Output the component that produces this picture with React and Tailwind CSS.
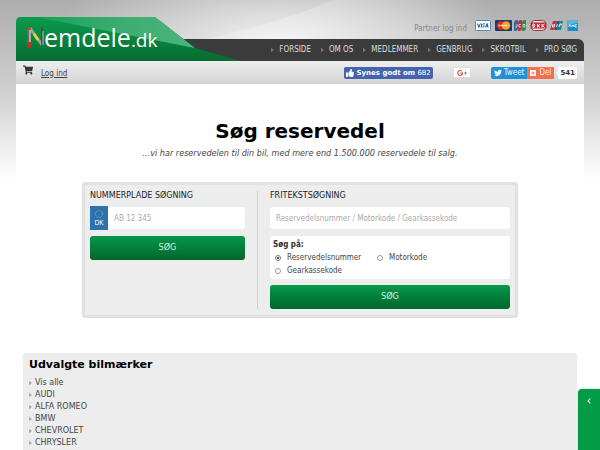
import React, { useState } from "react";
import { FaChevronLeft, FaShoppingCart, FaThumbsUp, FaTwitter } from "react-icons/fa";
import { FaGooglePlusG } from "react-icons/fa6";

const menu = ["FORSIDE", "OM OS", "MEDLEMMER", "GENBRUG", "SKROTBIL", "PRO SØG"];

const brands = ["Vis alle", "AUDI", "ALFA ROMEO", "BMW", "CHEVROLET", "CHRYSLER"];

const searchTypes = ["Reservedelsnummer", "Motorkode", "Gearkassekode"];

const Arrow = ({ className }) => (
  <svg viewBox="0 0 4 6" className={`h-[6px] w-[3px] shrink-0 ${className}`} aria-hidden="true">
    <path d="M0 0L4 3L0 6Z" fill="currentColor" />
  </svg>
);

// Grå baggrund med lysskær bag headeren
const Background = () => (
  <svg
    viewBox="0 0 600 180"
    preserveAspectRatio="none"
    className="absolute inset-x-0 top-0 h-[180px] w-full"
    aria-hidden="true"
  >
    <defs>
      <linearGradient id="bgFade" x1="0" y1="0" x2="0" y2="1">
        <stop offset="0" stopColor="#adadad" />
        <stop offset="0.5" stopColor="#cfcfcf" />
        <stop offset="1" stopColor="#fff" />
      </linearGradient>
      <radialGradient id="bgGlow" cx="0.5" cy="0.5" r="0.5">
        <stop offset="0" stopColor="#fff" stopOpacity="0.8" />
        <stop offset="1" stopColor="#fff" stopOpacity="0" />
      </radialGradient>
      <linearGradient id="bgBeam" x1="0.3" y1="0" x2="1" y2="0">
        <stop offset="0" stopColor="#fff" stopOpacity="0.25" />
        <stop offset="1" stopColor="#fff" stopOpacity="0" />
      </linearGradient>
    </defs>
    <rect width="600" height="180" fill="url(#bgFade)" />
    <ellipse cx="280" cy="42" rx="230" ry="90" fill="url(#bgGlow)" />
    <path d="M332 0Q290 20 205 39H480V0Z" fill="url(#bgBeam)" />
  </svg>
);

// Kort der kan betales med
const Cards = () => (
  <svg viewBox="0 0 104 12" className="h-3 w-[104px]" aria-hidden="true">
    <rect x="0.5" y="0.5" width="15" height="10" rx="1" fill="#fff" stroke="#4b8dbb" />
    <path d="M2.500 3.500l1.300 4l1.500-4M6.800 3.500l-.6 4M9.800 3.800c-2-.6-2.200.8-1.200 1.500s.8 2-1.200 1.700M10.300 7.500l1.800-4l1 4M11 6.300h2" fill="none" stroke="#17578f" strokeWidth="1" />
    <rect x="20" y="0" width="17" height="11" rx="1" fill="#1c3a6e" />
    <circle cx="26" cy="5.500" r="4.300" fill="#d8301f" />
    <circle cx="31" cy="5.500" r="4.300" fill="#f5a11c" />
    <path d="M23.500 5.500h10" stroke="#fff" strokeOpacity="0.800" strokeWidth="1.400" strokeDasharray="1.400 .5" />
    <path d="M42 0h1v8q0 3-3 3h-1V3q0-3 3-3z" fill="#3267a8" />
    <path d="M46 0h1v8q0 3-3 3h-1V3q0-3 3-3z" fill="#c32c45" />
    <path d="M50 0h1v8q0 3-3 3h-1V3q0-3 3-3z" fill="#2e8b4b" />
    <path d="M42 4v3h-2M46 4.500h-2v2.500h2M48 4.500h2v2.500h-2z" fill="none" stroke="#fff" strokeOpacity="0.800" strokeWidth="0.800" />
    <rect x="56.500" y="0.500" width="14" height="10" rx="3" fill="#f1dcdc" stroke="#8f3a3d" />
    <rect x="55.500" y="2.500" width="16" height="6" rx="1" fill="#bf2c35" />
    <path d="M58 4v3.500h1q1.800-1.700 0-3.500zM62.500 4v3.500M65 4l-2 1.800l2 1.700M67 4v3.500M69.500 4l-2 1.800l2 1.700" fill="none" stroke="#fff" />
    <path d="M78 1h4l-2.500 9H75z" fill="#d42d3d" />
    <path d="M82 1h3l-2.500 9h-3z" fill="#245986" />
    <path d="M85 1h3l-2 9h-4z" fill="#168a8b" />
    <path d="M78 4l-.5 3h1.500l.6-3M82.500 4l-1 3M84 7l1-3h1.500l-.5 1.500" fill="none" stroke="#fff" strokeWidth="0.900" />
    <rect x="92.500" y="0" width="10.500" height="11" fill="#168ec4" />
    <path d="M92.500 0h10.500v3l-10.500 2z" fill="#56b5dc" />
    <path d="M93.500 7l1.300-2.500l1.300 2.500M97 7V4.800l1 1.200l1-1.200V7M102 4.800h-2V7h2" fill="none" stroke="#e3f5fb" strokeWidth="0.900" />
  </svg>
);

const Logo = () => (
  <a href="#" className="relative block h-11 w-[225px] shrink-0">
    <svg viewBox="0 0 225 44" className="h-11 w-[225px]" aria-hidden="true">
      <defs>
        <linearGradient id="logoDark" x1="0" y1="0" x2="0" y2="1">
          <stop offset="0" stopColor="#0a9c4d" />
          <stop offset="1" stopColor="#066b32" />
        </linearGradient>
        <linearGradient id="logoLight" x1="0" y1="0" x2="1" y2="0">
          <stop offset="0" stopColor="#12a254" />
          <stop offset="0.5" stopColor="#3bac70" />
          <stop offset="1" stopColor="#4fb47c" />
        </linearGradient>
      </defs>
      <path d="M5 0H139L179 31L225 44H0V5Q0 0 5 0Z" fill="url(#logoDark)" />
      <path d="M20 0H139L179 31Q107 17 20 0Z" fill="url(#logoLight)" />
      {/* N'et er bygget af værktøj */}
      <path d="M14 11L26 28" stroke="#9aa59a" strokeWidth="3" />
      <path d="M18 17L22 23" stroke="#e8d43c" strokeWidth="2.500" />
      <path d="M13 12V27" stroke="#6b6a62" strokeWidth="3.500" />
      <path d="M14 12V26" stroke="#c3cbc2" strokeWidth="1.500" />
      <path d="M26 10V29" stroke="#3f4a42" strokeWidth="1.500" />
      <path d="M27 14V28" stroke="#b4beb3" strokeWidth="1" />
      <path d="M11 25h4.500v5.500h-4.500z" fill="#cf2a24" />
      <path d="M12 10.500h3v2.500h-3z" fill="#c14a36" />
    </svg>
    <span className="absolute top-1.5 left-[28px] font-['Open_Sans',sans-serif] text-[25px] leading-7 whitespace-nowrap text-white">
      emdele<span className="text-[19px]">.dk</span>
    </span>
  </a>
);

const Social = () => (
  <div className="flex items-center text-[7px] leading-3">
    <button className="flex h-3 items-center gap-[3px] rounded-xs bg-[#4464ad] px-[2px] text-white">
      <FaThumbsUp className="size-2" />
      <span className="font-['DejaVu_Sans',sans-serif]">
        <b>Synes godt om</b> 682
      </span>
    </button>
    <button
      aria-label="Google plus"
      className="ml-5 flex h-[11px] w-[18px] items-center justify-center rounded-[1px] border border-[#ddd] bg-white text-[#d4473b]"
    >
      <FaGooglePlusG className="size-[10px]" />
    </button>
    <button className="ml-5 flex h-3 items-center gap-[2px] rounded-l-xs bg-[#1d92d6] px-[3px] text-[8px] text-[#e6f4fb]">
      <FaTwitter className="size-2" />
      Tweet
    </button>
    <button className="flex h-3 items-center gap-[3px] bg-[#f4704f] px-[3px] text-[8px] text-[#fde3dc]">
      <svg viewBox="0 0 6 6" className="size-[6px]" aria-hidden="true">
        <path d="M0 0h6v6H0z" fill="#fff" />
        <path d="M3 1.500v3M1.500 3h3" stroke="#f4704f" />
      </svg>
      Del
    </button>
    <span className="relative ml-1 h-3 rounded-[1px] bg-white px-[2px] font-bold text-[#333] font-['DejaVu_Sans',sans-serif]">
      <Arrow className="absolute top-[3px] -left-[2px] rotate-180 text-white" />
      541
    </span>
  </div>
);

const GreenButton = () => (
  <button
    type="submit"
    className="h-6 w-full rounded-[3px] bg-linear-to-b from-[#04994a] to-[#02662d] text-[9px] text-[#dcefe3]"
  >
    SØG
  </button>
);

const SearchBox = () => {
  const [type, setType] = useState("Reservedelsnummer");

  const handleSubmit = (e) => {
    e.preventDefault();
  };

  return (
    <div className="mx-auto grid w-full max-w-[436px] grid-cols-[2fr_3fr] rounded-[3px] border-3 border-[#e2e2e2] bg-[#ededed] px-[5px] py-[6px] text-[8px]">
      <form onSubmit={handleSubmit} className="border-r border-[#d0d0d0] pr-3">
        <label htmlFor="plate" className="block leading-[9px] text-[#222] font-['DejaVu_Sans',sans-serif]">
          NUMMERPLADE SØGNING
        </label>
        <div className="mt-1.5 flex h-6 items-center">
          <div className="flex h-6 w-[18px] shrink-0 flex-col items-center justify-center bg-[#2b73ae] text-[7px] leading-2 text-white">
            <svg viewBox="0 0 10 10" className="size-[10px]" aria-hidden="true">
              <circle cx="5" cy="5" r="3.5" fill="none" stroke="#8fae9b" strokeDasharray="1.2 1" />
            </svg>
            DK
          </div>
          <input
            id="plate"
            placeholder="AB 12 345"
            className="h-[22px] w-full min-w-0 rounded-r-[3px] bg-white px-1.5 outline-none placeholder:text-[#aaa]"
          />
        </div>
        <div className="mt-1.5">
          <GreenButton />
        </div>
      </form>

      <form onSubmit={handleSubmit} className="pl-3">
        <label htmlFor="freetext" className="block leading-[9px] text-[#222] font-['DejaVu_Sans',sans-serif]">
          FRITEKSTSØGNING
        </label>
        <div className="mt-1.5 flex h-6 items-center">
          <input
            id="freetext"
            placeholder="Reservedelsnummer / Motorkode / Gearkassekode"
            className="h-[22px] w-full min-w-0 rounded-[3px] bg-white px-1.5 outline-none placeholder:text-[#aaa]"
          />
        </div>
        <fieldset className="mt-1.5 rounded-[3px] bg-white px-[3px] py-[2px]">
          <legend className="float-left w-full leading-[13px] font-bold text-[#333]">Søg på:</legend>
          <div className="clear-both flex flex-wrap">
            {searchTypes.map((item) => (
              <label key={item} className="flex w-[102px] items-center gap-1.5 pl-[2px] leading-[13px]">
                <input
                  type="radio"
                  name="searchType"
                  checked={type === item}
                  onChange={() => setType(item)}
                  className="size-[6px] appearance-none rounded-full border border-[#999] bg-white checked:border-[#777] checked:bg-[#111] checked:bg-clip-content checked:p-px"
                />
                {item}
              </label>
            ))}
          </div>
        </fieldset>
        <div className="mt-1.5">
          <GreenButton />
        </div>
      </form>
    </div>
  );
};

const App = () => {
  return (
    <div className="relative flex min-h-screen flex-col bg-white font-['DejaVu_Sans_Condensed','DejaVu_Sans',sans-serif] text-[#444]">
      <Background />

      <div className="relative mx-4 flex flex-1 flex-col">
        <header>
          <div className="flex h-[39px] items-end justify-end gap-2 pr-[5px] pb-[3px]">
            <a href="#" className="text-[8px] leading-[14px] text-[#888]">
              Partner log ind
            </a>
            <div className="pb-1">
              <Cards />
            </div>
          </div>
          <div className="-mt-[22px] flex h-11 items-end">
            <Logo />
            <nav className="-ml-[60px] flex h-[22px] flex-1 items-center justify-end gap-[10px] rounded-tr-md bg-[#3b3b3c] pr-[7px] text-[8px] text-[#ddd]">
              {menu.map((item) => (
                <a href="#" key={item} className="flex items-center gap-[5px]">
                  <Arrow className="text-[#777]" />
                  {item}
                </a>
              ))}
            </nav>
          </div>
          <div className="flex h-[23px] items-center bg-linear-to-b from-[#efefef] to-[#d3d3d3] px-[7px]">
            <FaShoppingCart className="mb-1.5 size-[10px] text-[#333]" />
            <a href="#" className="ml-2 pt-[2px] text-[8px] underline">
              Log ind
            </a>
            <div className="ml-auto">
              <Social />
            </div>
          </div>
        </header>

        <main className="flex flex-1 flex-col bg-white px-[7px] pt-[35px]">
          <h1 className="text-center text-[20px] leading-6 font-bold text-black font-['DejaVu_Sans',sans-serif]">
            Søg reservedel
          </h1>
          <p className="mt-[3px] mb-[22px] text-center text-[9px] leading-[14px] italic">
            ...vi har reservedelen til din bil, med mere end 1.500.000 reservedele til salg.
          </p>

          <SearchBox />

          <section className="mt-[35px] flex-1 rounded-t-[3px] bg-[#ededed] px-[6px] pt-1.5 font-['DejaVu_Sans',sans-serif]">
            <h2 className="text-[11px] leading-3 font-bold text-black">Udvalgte bilmærker</h2>
            <ul className="mt-1.5 text-[8px] leading-3">
              {brands.map((brand) => (
                <li key={brand}>
                  <a href="#" className="flex items-center gap-[3px]">
                    <Arrow className="text-[#aaa]" />
                    {brand}
                  </a>
                </li>
              ))}
            </ul>
          </section>
        </main>
      </div>

      <button
        aria-label="Åbn panel"
        className="fixed right-0 bottom-0 flex h-[62px] w-[23px] justify-center rounded-tl-[5px] border-t border-l border-[#d8f0e0] bg-[#029b46] pt-[9px] text-white"
      >
        <FaChevronLeft className="size-[6px]" />
      </button>
    </div>
  );
};

export default App;
